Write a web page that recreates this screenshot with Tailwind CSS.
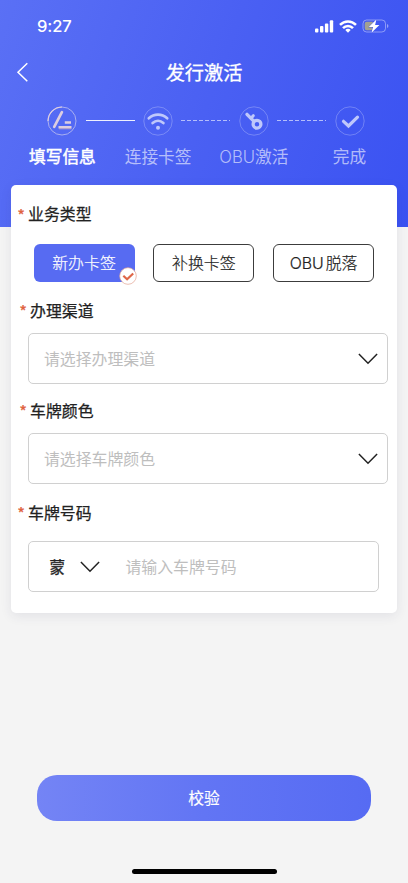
<!DOCTYPE html>
<html lang="zh-CN">
<head>
<meta charset="utf-8">
<meta name="viewport" content="width=device-width, initial-scale=1">
<title>发行激活</title>
<script src="https://cdn.jsdelivr.net/npm/@tailwindcss/browser@4"></script>
</head>
<body class="bg-[#f4f4f4]">
<div class="flex h-[883px] w-[408px] flex-col overflow-hidden bg-[#f4f4f4] font-['Noto_Sans_CJK_SC',sans-serif] text-[15.900px] text-[#222]">
  <header class="h-[227px] shrink-0 bg-linear-[110deg,#5a70f5_0%,#4a60f3_50%,#3a52f2_100%] text-white">
    <div class="flex h-[52px] items-center justify-between pl-[37px] pr-[19px]">
      <span class="font-[Inter,sans-serif] text-[16.5px] font-medium leading-none tracking-[-0.1px]">9:27</span>
      <div class="flex items-center">
        <svg class="h-[13px] w-[19px]" viewBox="0 0 19 13" fill="#fff"><rect x="0" y="8.5" width="3.4" height="4" rx="1"/><rect x="5" y="6" width="3.4" height="6.5" rx="1"/><rect x="9.9" y="3.5" width="3.4" height="9" rx="1"/><rect x="14.8" y="0.3" width="3.4" height="12.2" rx="1"/></svg>
        <svg class="ml-[5px] h-[13px] w-[18px]" viewBox="0 0 18 13" fill="none" stroke="#fff" stroke-width="2.500"><path d="M1 4.900C5.600 .3 12.400 .3 17 4.900"/><path d="M4 8.200c2.800-2.900 7.200-2.900 10 0"/><path d="M6.300 9.900c1.500-1.400 3.900-1.400 5.400 0L9 12.700z" fill="#fff" stroke="none"/></svg>
        <svg class="ml-[5px] h-[14px] w-[27px]" viewBox="0 0 27 14"><rect x="1" y="1" width="22.5" height="12" rx="3.6" fill="none" stroke="#fff" stroke-opacity=".4"/><path d="M25 5v4c1.900-.7 1.900-3.300 0-4z" fill="#fff" fill-opacity=".45"/><path d="M4.700 2.700h6.100v8.600H4.700a2 2 0 0 1-2-2V4.700a2 2 0 0 1 2-2z" fill="#a2a092"/><path d="M14.400.6 6.800 8h4.300l-1.600 5.800L17.400 6h-4.300z" fill="#fff" stroke="#4359f3" stroke-width=".8" paint-order="stroke"/></svg>
      </div>
    </div>
    <div class="grid h-[42px] grid-cols-[60px_1fr_60px] items-center">
      <svg class="-mt-[2px] ml-[16px] h-[20px] w-[13px]" viewBox="0 0 13 20" fill="none" stroke="#fff" stroke-width="1.5"><path d="M11.300 1.200 2 10.300l9.300 9"/></svg>
      <h1 class="text-center text-[19.200px] font-normal leading-none [-webkit-text-stroke:0.3px_currentColor]">发行激活</h1>
    </div>
    <div class="grid grid-cols-[95.700px_95.700px_95.700px_95.700px] pl-[14.600px] pt-[12px] text-center text-[16.700px] font-normal text-white/60">
      <div class="relative flex flex-col items-center">
        <svg class="h-[30px] w-[30px]" viewBox="0 0 30 30" fill="none"><circle cx="15" cy="15" r="14" stroke="#a9aff0"/><path d="M1 15A14 14 0 0 1 15 1" stroke="#e0d0e0" stroke-width="1.200"/><path d="M14.900 6.200 7.200 20.800" stroke="#dccde0" stroke-width="2.700" stroke-linecap="round"/><path d="M17.800 16.500H24M11.500 21.300H24.500" stroke="#dccde0" stroke-width="2.400"/><path d="M12 22.800H24.500" stroke="#cfa9bd" stroke-width=".7"/></svg>
        <span class="mt-[7.500px] leading-[24px] text-white [-webkit-text-stroke:0.5px_currentColor]">填写信息</span>
        <i class="absolute left-[71.500px] top-[14px] w-[49px] border-t border-white/90"></i>
      </div>
      <div class="relative flex flex-col items-center">
        <svg class="h-[30px] w-[30px]" viewBox="0 0 30 30" fill="none" stroke="#bfc8fb"><circle cx="15" cy="15" r="14.200" stroke="#fff" stroke-opacity=".25"/><path d="M5.800 12.300c5.400-4.900 13-4.900 18.400 0M9.600 17c3.300-3 7.500-3 10.800 0" stroke-width="2.700" stroke-linecap="round"/><circle cx="15" cy="21.800" r="2" fill="#bfc8fb" stroke="none"/></svg>
        <span class="mt-[8px] leading-[24px]">连接卡签</span>
        <svg class="absolute left-[71px] top-[14px] h-[2px] w-[49px]"><path d="M0 .5H49" stroke="#b4befb" stroke-width="1" stroke-dasharray="4 2"/></svg>
      </div>
      <div class="relative flex flex-col items-center">
        <svg class="h-[30px] w-[30px]" viewBox="0 0 30 30" fill="none" stroke="#bfc8fb"><circle cx="15" cy="15" r="14.200" stroke="#fff" stroke-opacity=".25"/><circle cx="18" cy="18.200" r="3.900" stroke-width="3.300"/><path d="M15 15.300 8 8.300" stroke-width="3.300" stroke-linecap="round"/><path d="M12 12.300l2.300-2.600" stroke-width="3" stroke-linecap="round"/></svg>
        <span class="mt-[8px] leading-[24px]"><span class="font-[Inter,sans-serif] font-light">OBU</span>激活</span>
        <svg class="absolute left-[71px] top-[14px] h-[2px] w-[49px]"><path d="M0 .5H49" stroke="#b4befb" stroke-width="1" stroke-dasharray="4 2"/></svg>
      </div>
      <div class="flex flex-col items-center">
        <svg class="h-[30px] w-[30px]" viewBox="0 0 30 30" fill="none"><circle cx="15" cy="15" r="14.200" stroke="#fff" stroke-opacity=".25"/><path d="m8.500 15.300 5 4.700 9-8.800" stroke="#bfc8fb" stroke-width="3.200" stroke-linecap="round"/></svg>
        <span class="mt-[8px] leading-[24px]">完成</span>
      </div>
    </div>
  </header>

  <main class="z-10 mx-[11px] -mt-[42px] h-[428px] shrink-0 rounded-[5px] bg-white shadow-[0_3px_12px_rgba(40,40,90,0.09)]">
    <div class="flex h-[59px] items-center pb-[1px] pl-[6.500px] leading-none [-webkit-text-stroke:0.25px_currentColor]"><b class="w-[10.500px] text-[15px] font-medium text-[#e0633f]">*</b>业务类型</div>
    <div class="flex gap-[18.800px] pl-[22.500px] leading-none">
      <button class="relative h-[38px] w-[101px] rounded-[6px] bg-[#576bf2] font-light text-white [-webkit-text-stroke:0.2px_currentColor]">新办卡签
        <svg class="absolute -bottom-[2.500px] -right-[2.500px] h-[18px] w-[18px]" viewBox="0 0 18 18" fill="none"><circle cx="9" cy="9" r="8.300" fill="#fff" stroke="#e3a392" stroke-width=".7"/><path d="m4.300 8.700 3.800 3.500 6.100-5.700" stroke="#df6748" stroke-width="2.200"/></svg>
      </button>
      <button class="h-[38px] w-[101px] rounded-[6px] border border-[#3c3c3c] font-light [-webkit-text-stroke:0.2px_currentColor]">补换卡签</button>
      <button class="h-[38px] w-[101px] rounded-[6px] border border-[#3c3c3c] font-light [-webkit-text-stroke:0.2px_currentColor]"><span class="font-[Inter,sans-serif]">OBU</span><span class="ml-[2px]">脱落</span></button>
    </div>
    <div class="flex h-[51px] items-center pl-[8.500px] pt-[6px] leading-none [-webkit-text-stroke:0.25px_currentColor]"><b class="w-[10.500px] text-[15px] font-medium text-[#e0633f]">*</b>办理渠道</div>
    <div class="ml-[17.400px] flex h-[51px] w-[360px] items-center justify-between rounded-[5px] border border-[#d0d0d0] pl-[14.500px] pr-[9px] leading-none text-[#bebebe]"><span>请选择办理渠道</span>
      <svg class="h-[12px] w-[20px]" viewBox="0 0 20 12" fill="none" stroke="#222" stroke-width="1.500"><path d="m.9 1 9.100 9.300L19.100 1"/></svg>
    </div>
    <div class="flex h-[49px] items-center pl-[8.500px] pt-[4px] leading-none [-webkit-text-stroke:0.25px_currentColor]"><b class="w-[10.500px] text-[15px] font-medium text-[#e0633f]">*</b>车牌颜色</div>
    <div class="ml-[17.400px] flex h-[51px] w-[360px] items-center justify-between rounded-[5px] border border-[#d0d0d0] pl-[14.500px] pr-[9px] leading-none text-[#bebebe]"><span>请选择车牌颜色</span>
      <svg class="h-[12px] w-[20px]" viewBox="0 0 20 12" fill="none" stroke="#222" stroke-width="1.500"><path d="m.9 1 9.100 9.300L19.100 1"/></svg>
    </div>
    <div class="flex h-[57px] items-center pl-[6.500px] leading-none [-webkit-text-stroke:0.25px_currentColor]"><b class="w-[10.500px] text-[15px] font-medium text-[#e0633f]">*</b>车牌号码</div>
    <div class="ml-[17.400px] flex h-[51px] w-[351px] items-center rounded-[5px] border border-[#d0d0d0] pl-[20px] leading-none">
      <span class="text-[15.500px] [-webkit-text-stroke:0.3px_currentColor]">蒙</span>
      <svg class="ml-[15px] h-[12px] w-[20px]" viewBox="0 0 20 12" fill="none" stroke="#222" stroke-width="1.500"><path d="m.9 1 9.100 9.300L19.100 1"/></svg>
      <span class="ml-[25.500px] text-[#bebebe]">请输入车牌号码</span>
    </div>
  </main>

  <button class="mx-[37px] mt-[162px] h-[46px] shrink-0 rounded-[20px] bg-linear-to-r from-[#7484f5] via-[#6275f4] to-[#566bf3] text-[15.700px] leading-none text-white [-webkit-text-stroke:0.2px_currentColor]">校验</button>
  <div class="mx-auto mt-[48px] h-[5px] w-[145px] shrink-0 rounded-full bg-black"></div>
</div>
</body>
</html>
